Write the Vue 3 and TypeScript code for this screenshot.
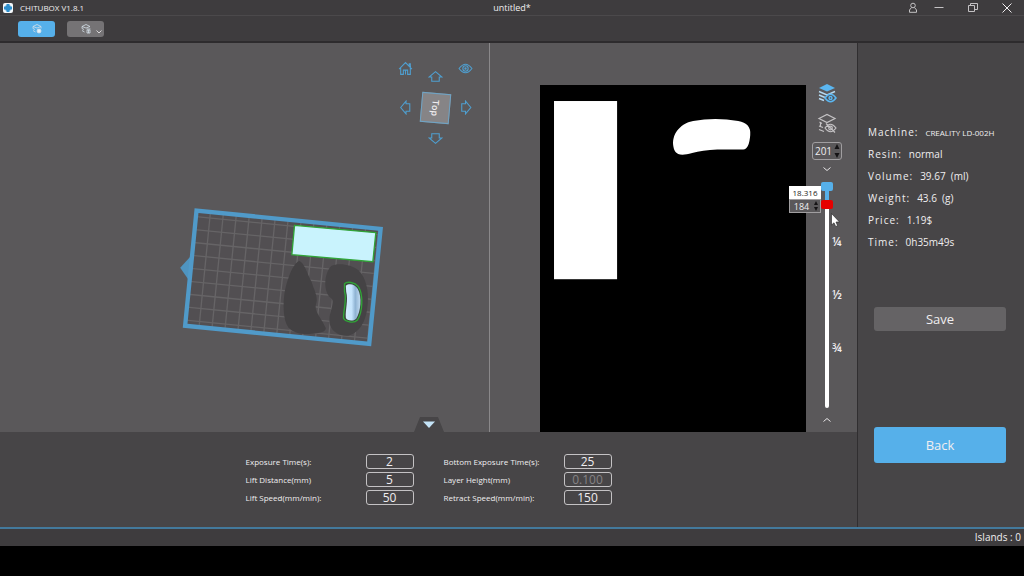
<script setup lang="ts">
import { computed, ref } from 'vue'

interface Field {
  id: string
  label: string
  value: string
  disabled?: boolean
}

interface Info {
  label: string
  value: string
  small?: boolean
}

const fields: Field[] = [
  { id: 'exposure', label: 'Exposure Time(s):', value: '2' },
  { id: 'bottom-exposure', label: 'Bottom Exposure Time(s):', value: '25' },
  { id: 'lift-distance', label: 'Lift Distance(mm)', value: '5' },
  { id: 'layer-height', label: 'Layer Height(mm)', value: '0.100', disabled: true },
  { id: 'lift-speed', label: 'Lift Speed(mm/min):', value: '50' },
  { id: 'retract-speed', label: 'Retract Speed(mm/min):', value: '150' },
]

const info: Info[] = [
  { label: 'Machine:', value: 'CREALITY LD-002H', small: true },
  { label: 'Resin:', value: 'normal' },
  { label: 'Volume:', value: '39.67  (ml)' },
  { label: 'Weight:', value: '43.6  (g)' },
  { label: 'Price:', value: '1.19$' },
  { label: 'Time:', value: '0h35m49s' },
]

const columns = Array.from({ length: 14 }, (_, i) => 42 + i * 39)
const rows = Array.from({ length: 9 }, (_, i) => 18 + i * 39)

const maxLayer = 201
const topLayer = ref(201)
const layer = ref(184)
const gap = computed(() => ((maxLayer - layer.value) / maxLayer) * 100 + '%')
</script>

<template>
  <div class="app">
    <header class="titlebar">
      <div class="brand">
        <svg class="logo" viewBox="0 0 20 20" aria-hidden="true">
          <rect width="20" height="20" rx="4" fill="#f4f8fb" />
          <path d="M7 2h6v3h2v2h3v6h-3v2h-2v3H7v-3H5v-2H2V7h3V5h2z" fill="#2d8fce" />
        </svg>
        <span>CHITUBOX V1.8.1</span>
      </div>
      <span class="doc">untitled*</span>
      <div class="window-buttons">
        <button type="button" aria-label="Account">
          <svg viewBox="0 0 12 12"><circle cx="6" cy="3.5" r="2.3" /><path d="M4.500 5.500L2.500 8v2.300h7V8l-2-2.500" /></svg>
        </button>
        <button type="button" aria-label="Minimize">
          <svg viewBox="0 0 12 12"><path d="M1.500 5.500h9" /></svg>
        </button>
        <button type="button" aria-label="Restore">
          <svg viewBox="0 0 12 12"><path d="M1.500 3.500h6v6h-6zM3.500 3.500v-2h7v6h-3" /></svg>
        </button>
        <button type="button" aria-label="Close">
          <svg viewBox="0 0 12 12"><path class="bright" d="M1.500 1.500l9 9M10.500 1.500l-9 9" /></svg>
        </button>
      </div>
    </header>

    <div class="toolbar">
      <button type="button" class="tool active" aria-label="Slice">
        <svg class="tool-icon" viewBox="0 0 12 12">
          <path d="M2 3.500l4-2 4 2-4 1.500zM2 3.500v2l2 1M2 7.500l2.500 1.500M10 3.500v2" />
          <circle cx="8" cy="8" r="2" fill="#e4f3fd" />
        </svg>
      </button>
      <button type="button" class="tool" aria-label="Slice options">
        <svg class="tool-icon" viewBox="0 0 12 12">
          <path d="M2 3.500l4-2 4 2-4 1.500zM2 3.500v2l2 1M2 7.500l2.500 1.500" />
          <path d="M6.500 6h4M7 7h3v3H7zM8.500 7v3" />
        </svg>
        <svg class="caret" viewBox="0 0 8 6"><path d="M1.500 1.500L4 4l2.500-2.500" /></svg>
      </button>
    </div>

    <div class="body">
      <main class="workspace">
        <div class="views">
          <section class="scene">
            <svg class="stage" viewBox="0 0 489 389" preserveAspectRatio="xMidYMid slice" aria-label="Build plate">
              <defs>
                <linearGradient id="bean" x1="0" x2="1">
                  <stop offset="0" stop-color="#d3ecff" />
                  <stop offset="0.4" stop-color="#c5e4fc" />
                  <stop offset="0.65" stop-color="#8fb3d3" />
                  <stop offset="1" stop-color="#c3dcf2" />
                </linearGradient>
              </defs>
              <g transform="translate(170 152) scale(.33333)">
                <path d="M31 218L64 182L56 254Z" fill="#4f94c0" />
                <g transform="translate(80 47) rotate(5.65)">
                  <rect width="555" height="347" fill="#524f52" />
                  <path
                    v-for="x in columns" :key="'c' + x" :d="`M${x} 0V347`"
                    stroke="#666466" stroke-width="4"
                  />
                  <path
                    v-for="y in rows" :key="'r' + y" :d="`M0 ${y}H555`"
                    stroke="#666466" stroke-width="4"
                  />
                </g>
                <path
                  d="M388 198C404 204 410 232 425 260C433 285 444 304 440 322C430 350 452 362 468 400Q468 412 440 415C400 420 372 415 356 398C338 375 340 320 344 295C352 250 370 205 388 198Z"
                  fill="#434143"
                />
                <path
                  d="M484 213C505 202 545 208 566 226C590 250 596 290 594 320C592 370 574 412 535 422C505 424 480 405 479 380C476 350 500 320 482 308C460 290 462 235 484 213Z"
                  fill="#454345"
                />
                <g transform="translate(80 47) rotate(5.65)">
                  <rect width="555" height="347" fill="none" stroke="#509ac9" stroke-width="13" />
                </g>
                <path d="M374 91L618 113L609 200L366 179Z" fill="#c9f3fd" stroke="#30a437" stroke-width="4" />
                <path
                  d="M524 266C532 258 555 262 565 274C580 295 580 350 562 376C552 386 525 380 521 370C520 345 532 315 524 290Z"
                  fill="#3a493b" stroke="#30a437" stroke-width="4"
                />
                <path
                  d="M528 272C539 263 556 268 564 282C577 306 573 350 559 371C550 380 530 377 528 368C526 345 536 315 529 290Z"
                  fill="url(#bean)"
                />
              </g>
            </svg>
            <nav class="gizmo" aria-label="View">
              <button type="button" class="corner" aria-label="Home">
                <svg viewBox="0 0 14 14"><path d="M1 7.500L7 1.500l6 6M2.500 6.500v6H5V8.500h4v4h2.500v-6M7 8.500v4M10.500 4.500V2.500h1v3" /></svg>
              </button>
              <button type="button" aria-label="Rotate up">
                <svg viewBox="0 0 14 14"><path d="M7 2.500l6 5h-2.500v4h-7v-4H1z" /></svg>
              </button>
              <button type="button" class="corner" aria-label="Perspective">
                <svg viewBox="0 0 14 14"><path d="M1 7q6-8 12 0q-6 8-12 0z" /><circle cx="7" cy="7" r="2.500" /><circle cx="7" cy="7" r=".6" /></svg>
              </button>
              <button type="button" aria-label="Rotate left">
                <svg viewBox="0 0 14 14"><path d="M2.500 7l5-6v2.500h3.500v7H7.500V13z" /></svg>
              </button>
              <button type="button" class="cube">Top</button>
              <button type="button" aria-label="Rotate right">
                <svg viewBox="0 0 14 14"><path d="M12 7L7 1v2.500H3.500v7H7V13z" /></svg>
              </button>
              <span></span>
              <button type="button" aria-label="Rotate down">
                <svg viewBox="0 0 14 14"><path d="M7 11.500l6-5h-2.500v-4h-7v4H1z" /></svg>
              </button>
            </nav>
          </section>

          <section class="slice">
            <svg class="slice-image" viewBox="0 0 266 347" preserveAspectRatio="xMidYMin slice" aria-label="Layer preview">
              <rect width="266" height="347" fill="#000" />
              <rect x="14" y="16" width="63" height="178" fill="#fff" />
              <path
                d="M133 60C132 47 142 38 153 36Q175 32 198 36Q211 38 210 50Q209 64 203 64.500H177Q162 65 152 68C137 72 134 68 133 60Z"
                fill="#fff"
              />
            </svg>
            <div class="rail">
              <button type="button" class="layers" aria-label="Show layers">
                <svg viewBox="0 0 22 22">
                  <path d="M3 6l8-4 8 4-8 3.500z" fill="#5bb6f0" />
                  <path d="M3 9.500l8 3.500 8-3.500M3 13l6 2.500M3 16.500l5 2" stroke="#b4d8ef" stroke-width="1.500" />
                  <path d="M9 16q5.500-7.500 11 0q-5.500 7.500-11 0z" fill="#4f4d4f" stroke="#5bb6f0" stroke-width="1.500" />
                  <circle cx="14.500" cy="16" r="1.500" stroke="#5bb6f0" stroke-width="1.500" />
                </svg>
              </button>
              <button type="button" class="layers" aria-label="Hide layers">
                <svg viewBox="0 0 22 22" stroke="#c4c2c4" stroke-width="1.200">
                  <path d="M3 6.500l8-4 8 4-8 4z" />
                  <path d="M3.500 10l2.500 1.500M4.500 10.500v4M3 14l4 1.500M3 17.500l5 2" />
                  <path d="M9 16q5.500-7.500 11 0q-5.500 7.500-11 0zM10 11.500l9 9" />
                  <circle cx="14.500" cy="16" r="1.800" />
                </svg>
              </button>
              <div class="spin">
                <input type="text" v-model="topLayer" aria-label="Top layer" />
                <svg viewBox="0 0 6 14"><path d="M3 0l2.500 5h-5zM3 14l2.500-5h-5z" fill="#151315" /></svg>
              </div>
              <button type="button" class="step up" aria-label="Layer up">
                <svg viewBox="0 0 10 6"><path d="M1.500 1.500L5 4.500l3.500-3" /></svg>
              </button>
              <div class="slider">
                <div class="track"><div class="filled" :style="{ height: gap }"></div></div>
                <input class="upper" type="range" min="0" :max="maxLayer" v-model.number="topLayer" aria-label="Upper limit" />
                <input class="lower" type="range" min="0" :max="maxLayer" v-model.number="layer" aria-label="Current layer" />
                <div class="marks"><span>¼</span><span>½</span><span>¾</span></div>
                <div class="readout">
                  <output>18.316</output>
                  <div class="spin current">
                    <input type="text" v-model="layer" aria-label="Layer" />
                    <svg viewBox="0 0 6 14"><path d="M3 2l2 4h-4zM3 12l2-4h-4z" fill="#151315" /></svg>
                  </div>
                </div>
                <svg class="cursor" viewBox="0 0 9 14" aria-hidden="true">
                  <path d="M.5.5v11.500l2.500-2.200 1.700 3.700 1.900-.8-1.600-3.700h3.500z" fill="#fff" stroke="#222" stroke-width=".6" />
                </svg>
              </div>
              <button type="button" class="step down" aria-label="Layer down">
                <svg viewBox="0 0 10 6"><path d="M1.500 4.500L5 1.500l3.500 3" /></svg>
              </button>
            </div>
          </section>
          <button type="button" class="collapse" aria-label="Collapse parameters">
            <svg viewBox="0 0 30 15"><path d="M6 0h18l6 15H0z" fill="#474547" /><path d="M9 4.500h12l-6 6.500z" fill="#c4e3f7" /></svg>
          </button>
        </div>

        <form class="params" @submit.prevent>
          <template v-for="f in fields" :key="f.id">
            <label :for="f.id">{{ f.label }}</label>
            <input :id="f.id" type="text" :value="f.value" :disabled="f.disabled" />
          </template>
        </form>
      </main>

      <aside class="sidebar">
        <dl class="info">
          <div v-for="i in info" :key="i.label">
            <dt>{{ i.label }}</dt>
            <dd :class="{ small: i.small }">{{ i.value }}</dd>
          </div>
        </dl>
        <button type="button" class="save">Save</button>
        <button type="button" class="back">Back</button>
      </aside>
    </div>

    <footer class="status">Islands : 0</footer>
  </div>
</template>

<style>
body {
  margin: 0;
  background: #000;
}
</style>

<style scoped>
.app {
  box-sizing: border-box;
  display: flex;
  flex-direction: column;
  min-height: 100vh;
  padding-bottom: 30px;
  background: #000;
  color: #f0eef0;
  font-family: "Open Sans", "Noto Sans", sans-serif;
  font-size: 10px;
}
button {
  display: flex;
  align-items: center;
  justify-content: center;
  margin: 0;
  padding: 0;
  border: 0;
  background: none;
  color: inherit;
  font: inherit;
}
svg {
  display: block;
  fill: none;
}
input {
  box-sizing: border-box;
  min-width: 0;
  margin: 0;
  padding: 0;
  color: inherit;
  font: inherit;
}
.titlebar {
  display: grid;
  grid-template-columns: 1fr auto 1fr;
  align-items: center;
  height: 15px;
  border-bottom: 1px solid #4b494b;
  background: #3e3c3e;
  line-height: 15px;
}
.brand {
  display: flex;
  align-items: center;
  gap: 7px;
  padding-left: 3px;
  font-size: 8px;
}
.doc {
  font-size: 9px;
}
.logo {
  width: 10px;
  height: 10px;
}
.window-buttons {
  display: flex;
  justify-content: flex-end;
  gap: 22px;
  padding-right: 11px;
}
.window-buttons button:first-child {
  margin-right: -8px;
}
.window-buttons svg {
  width: 12px;
  height: 12px;
  stroke: #c4c2c4;
}
.window-buttons .bright {
  stroke: #f0eef0;
}
.toolbar {
  display: flex;
  align-items: center;
  gap: 12px;
  height: 25px;
  padding-left: 18px;
  border-bottom: 2px solid #2d2b2d;
  background: #3e3c3e;
}
.tool {
  position: relative;
  width: 37px;
  height: 16px;
  border-radius: 3px;
  background: #757375;
}
.tool.active {
  background: #56b0ea;
}
.tool-icon {
  width: 12px;
  height: 12px;
  stroke: #d4e0e8;
  stroke-width: 0.8;
}
.caret {
  position: absolute;
  right: 1px;
  bottom: 2px;
  width: 8px;
  height: 6px;
  stroke: #d8d6d8;
}
.body {
  flex: 1;
  display: flex;
}
.workspace {
  flex: 1;
  display: flex;
  flex-direction: column;
  min-width: 0;
  border-right: 1px solid #302e30;
}
.views {
  position: relative;
  flex: 1;
  display: grid;
  grid-template-columns: 4fr 3fr;
  background: #5a585a;
}
.scene {
  position: relative;
  border-right: 1px solid #8a888a;
}
.stage {
  position: absolute;
  inset: 0;
  width: 100%;
  height: 100%;
}
.gizmo {
  position: absolute;
  top: 18px;
  right: 8px;
  display: grid;
  grid-template-columns: repeat(3, 30px);
  grid-auto-rows: 31px;
  place-items: center;
}
.gizmo svg {
  width: 15px;
  height: 15px;
  stroke: #4f9fd0;
}
.gizmo .corner {
  align-self: start;
  height: 14px;
}
.gizmo .cube {
  box-sizing: border-box;
  width: 29px;
  height: 30px;
  border: 1px solid #6fa3c4;
  background: #868486;
  font-size: 9px;
  font-weight: 600;
  writing-mode: vertical-rl;
  transform: rotate(5deg);
}
.slice {
  display: flex;
  min-width: 0;
  padding: 42px 0 0 50px;
}
.slice-image {
  flex: 1;
  min-width: 0;
  height: 347px;
}
.rail {
  display: flex;
  flex-direction: column;
  align-items: center;
  width: 51px;
  padding-right: 9px;
  box-sizing: border-box;
}
.layers {
  height: 22px;
  margin-bottom: 8px;
}
.layers:first-child {
  margin-top: -3px;
}
.layers svg {
  width: 22px;
  height: 22px;
}
.spin {
  box-sizing: border-box;
  display: flex;
  align-items: center;
  width: 30px;
  height: 18px;
  padding-right: 1px;
  border: 1px solid #a09ea0;
  border-radius: 3px;
}
.spin input {
  flex: 1;
  height: 14px;
  border: 0;
  background: none;
  text-align: center;
}
.spin svg {
  width: 6px;
  height: 14px;
}
.step {
  width: 12px;
  height: 18px;
}
.step.up {
  margin-bottom: 4px;
}
.step.down {
  margin-top: 3px;
}
.step svg {
  width: 10px;
  height: 6px;
  stroke: #e8e6e8;
}
.slider {
  position: relative;
  width: 12px;
  height: 226px;
}
.track {
  position: absolute;
  inset: 4px 4px 0 4px;
  border-radius: 2px;
  background: #fff;
}
.filled {
  background: #56b0ea;
}
.slider input[type="range"] {
  position: absolute;
  inset: 0;
  width: 12px;
  height: 226px;
  appearance: none;
  background: none;
  pointer-events: none;
  writing-mode: vertical-lr;
  direction: rtl;
}
.slider input[type="range"]::-webkit-slider-thumb {
  appearance: none;
  width: 12px;
  height: 9px;
  border-radius: 2px;
  background: #56b0ea;
  pointer-events: auto;
}
.slider input.lower::-webkit-slider-thumb {
  background: #e60000;
}
.marks {
  position: absolute;
  top: 33px;
  left: 11px;
  display: grid;
  grid-auto-rows: 53px;
  font-size: 12px;
  font-weight: 600;
  line-height: 53px;
}
.readout {
  position: absolute;
  top: 4px;
  right: 12px;
  width: 32px;
}
.readout output {
  display: block;
  height: 13px;
  background: #fff;
  color: #222;
  font-size: 8px;
  line-height: 13px;
  text-align: center;
}
.spin.current {
  width: 32px;
  height: 14px;
  border-radius: 0;
  background: #5a585a;
}
.spin.current input {
  height: 12px;
  font-size: 9px;
}
.cursor {
  position: absolute;
  top: 31px;
  left: 10px;
  width: 9px;
  height: 14px;
}
.collapse {
  position: absolute;
  bottom: 0;
  left: 50%;
  width: 30px;
  height: 15px;
  transform: translateX(-50%);
}
.params {
  display: grid;
  grid-template-columns: 120px 78px 120px 48px;
  grid-auto-rows: 18px;
  justify-content: center;
  align-items: center;
  box-sizing: border-box;
  height: 95px;
  padding-top: 20px;
  background: #474547;
  font-size: 8px;
}
.params input {
  width: 48px;
  height: 15px;
  border: 1px solid #c4c2c4;
  border-radius: 3px;
  background: none;
  font-size: 12px;
  line-height: 13px;
  text-align: center;
}
.params input:disabled {
  color: #858385;
}
.sidebar {
  display: flex;
  flex-direction: column;
  box-sizing: border-box;
  width: 166px;
  padding: 78px 18px 0 10px;
  background: #474547;
}
.info {
  margin: 0;
}
.info div {
  display: flex;
  align-items: center;
  gap: 7px;
  height: 22px;
  white-space: pre;
}
.info dt {
  letter-spacing: 1px;
}
.info dd {
  margin: 0;
}
.info .small {
  font-size: 8px;
}
.save,
.back {
  margin-left: 6px;
  border-radius: 3px;
  font-size: 13px;
}
.save {
  height: 24px;
  margin-top: 54px;
  background: #656365;
}
.back {
  height: 36px;
  margin-top: 96px;
  background: #56b0ea;
}
.status {
  height: 17px;
  padding-right: 3px;
  border-top: 2px solid #43799c;
  background: #3e3c3e;
  font-size: 10px;
  line-height: 17px;
  text-align: right;
}
</style>
